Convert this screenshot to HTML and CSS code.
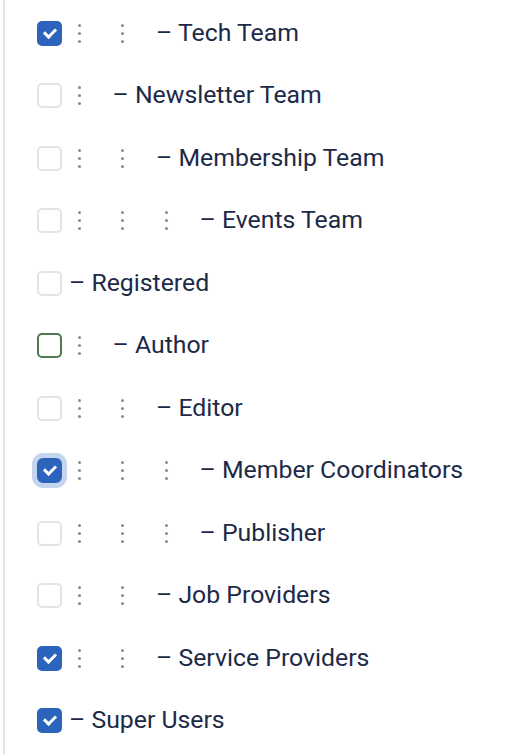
FILE: index.html
```html
<!DOCTYPE html>
<html>
<head>
<meta charset="utf-8">
<link rel="stylesheet" href="styles.css">
</head>
<body>
<div class="tree">
  <div class="row"><span class="cb checked"></span><span class="lvl"><i class="dots"></i></span><span class="lvl"><i class="dots"></i></span><span class="label">– Tech Team</span></div>
  <div class="row"><span class="cb"></span><span class="lvl"><i class="dots"></i></span><span class="label">– Newsletter Team</span></div>
  <div class="row"><span class="cb"></span><span class="lvl"><i class="dots"></i></span><span class="lvl"><i class="dots"></i></span><span class="label">– Membership Team</span></div>
  <div class="row"><span class="cb"></span><span class="lvl"><i class="dots"></i></span><span class="lvl"><i class="dots"></i></span><span class="lvl"><i class="dots"></i></span><span class="label">– Events Team</span></div>
  <div class="row"><span class="cb"></span><span class="label">– Registered</span></div>
  <div class="row"><span class="cb hover"></span><span class="lvl"><i class="dots"></i></span><span class="label">– Author</span></div>
  <div class="row"><span class="cb"></span><span class="lvl"><i class="dots"></i></span><span class="lvl"><i class="dots"></i></span><span class="label">– Editor</span></div>
  <div class="row"><span class="cb checked focus"></span><span class="lvl"><i class="dots"></i></span><span class="lvl"><i class="dots"></i></span><span class="lvl"><i class="dots"></i></span><span class="label">– Member Coordinators</span></div>
  <div class="row"><span class="cb"></span><span class="lvl"><i class="dots"></i></span><span class="lvl"><i class="dots"></i></span><span class="lvl"><i class="dots"></i></span><span class="label">– Publisher</span></div>
  <div class="row"><span class="cb"></span><span class="lvl"><i class="dots"></i></span><span class="lvl"><i class="dots"></i></span><span class="label">– Job Providers</span></div>
  <div class="row"><span class="cb checked"></span><span class="lvl"><i class="dots"></i></span><span class="lvl"><i class="dots"></i></span><span class="label">– Service Providers</span></div>
  <div class="row"><span class="cb checked"></span><span class="label">– Super Users</span></div>
</div>
</body>
</html>
```

FILE: styles.css
```css
html, body {
  margin: 0;
  padding: 0;
  background: #ffffff;
}
body {
  font-family: Roboto, "Liberation Sans", sans-serif;
  color: #1c2a48;
}
.tree {
  margin-left: 3px;
  border-left: 2px solid #dfe4ec;
  min-height: 754px;
  box-sizing: border-box;
  padding: 2px 0 0 32px;
}
.row {
  height: 62.5px;
  display: flex;
  align-items: center;
}
.cb {
  flex: none;
  width: 25px;
  height: 25px;
  box-sizing: border-box;
  border: 2px solid #e4e4e4;
  border-radius: 5px;
  background: #fff;
  margin-right: 7px;
  position: relative;
}
.cb.hover {
  border-color: #4b7b4f;
}
.cb.checked {
  background: #2b63bd;
  border-color: #2b63bd;
}
.cb.checked::after {
  content: "";
  position: absolute;
  width: 9px;
  height: 5px;
  border-left: 3px solid #fff;
  border-bottom: 3px solid #fff;
  transform: rotate(-45deg);
  top: 5px;
  left: 4.5px;
}
.cb.focus {
  box-shadow: 0 0 0 5px #c6d5ee;
  border-radius: 6px;
}
.lvl {
  flex: none;
  width: 43.5px;
  height: 24px;
  position: relative;
}
.dots {
  position: absolute;
  left: 8.5px;
  top: 2.5px;
  width: 3px;
  height: 3px;
  border-radius: 50%;
  background: #8c8c8c;
  box-shadow: 0 8px 0 #8c8c8c, 0 16px 0 #8c8c8c;
}
.label {
  font-size: 24.8px;
  line-height: 1;
  white-space: nowrap;
}
```
